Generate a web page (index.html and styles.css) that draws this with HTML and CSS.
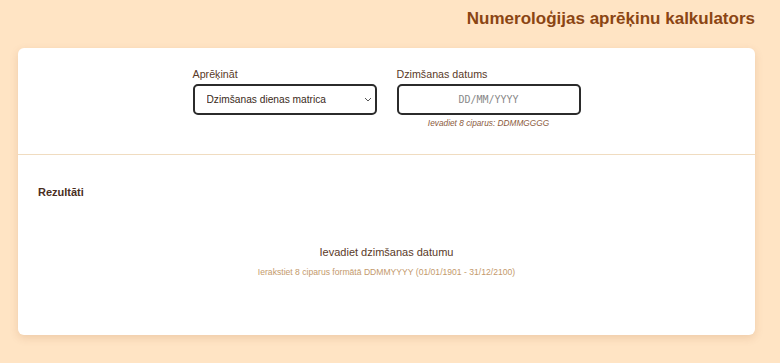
FILE: index.html
```html
<!DOCTYPE html>
<html lang="lv">
<head>
  <meta charset="UTF-8">
  <meta name="viewport" content="width=device-width, initial-scale=1.0">
  <title>Numeroloģijas aprēķinu kalkulators</title>
  <link rel="stylesheet" href="styles.css">
</head>
<body>
  <div class="page">
    <h1 class="title">Numeroloģijas aprēķinu kalkulators</h1>

    <div class="card">
      <!-- Input form -->
      <div class="form-section">
        <div class="field">
          <label for="calcType">Aprēķināt</label>
          <div class="select-wrap">
            <select id="calcType">
              <option>Dzimšanas dienas matrica</option>
            </select>
            <svg class="chevron" width="8" height="5" viewBox="0 0 8 5"><path d="M1 1l3 3 3-3" fill="none" stroke="#555" stroke-width="1"/></svg>
          </div>
        </div>
        <div class="field">
          <label for="birthDate">Dzimšanas datums</label>
          <input type="text" id="birthDate" placeholder="DD/MM/YYYY">
          <p class="hint">Ievadiet 8 ciparus: DDMMGGGG</p>
        </div>
      </div>

      <!-- Results -->
      <div class="results-section">
        <h3>Rezultāti</h3>
        <div class="empty-state">
          <p class="empty-main">Ievadiet dzimšanas datumu</p>
          <p class="empty-sub">Ierakstiet 8 ciparus formātā DDMMYYYY (01/01/1901 - 31/12/2100)</p>
        </div>
      </div>
    </div>
  </div>
</body>
</html>
```

FILE: styles.css
```css
/* Base styles */
* {
  box-sizing: border-box;
  font-family: "Liberation Sans", Arial, sans-serif;
}

body {
  margin: 0;
  background-color: #ffe4c4;
  color: #5a3a28;
}

.page {
  padding: 0 25px 27px 18px;
}

/* Header */
.title {
  margin: 0;
  padding: 9px 0 19px;
  text-align: right;
  font-size: 17px;
  line-height: 20px;
  color: #8b4513;
}

/* Card */
.card {
  background-color: #fff;
  border-radius: 6px;
  box-shadow: 0 3px 8px rgba(139, 69, 19, 0.15);
}

/* Form */
.form-section {
  display: flex;
  justify-content: center;
  gap: 20px;
  padding: 19px 20px 26px;
  border-bottom: 1px solid #f0dcc0;
}

.field {
  width: 184px;
  display: flex;
  flex-direction: column;
}

.field label {
  font-size: 10.7px;
  line-height: 14px;
  margin-bottom: 3px;
  color: #5a3a28;
}

.select-wrap {
  position: relative;
}

select,
input[type="text"] {
  width: 100%;
  height: 31px;
  border: 2px solid #2b2b2b;
  border-radius: 5px;
  background: #fff;
  font-size: 10.2px;
  color: #3a2a20;
  outline: none;
}

select {
  -webkit-appearance: none;
  appearance: none;
  padding: 0 20px 0 12px;
}

.chevron {
  position: absolute;
  right: 5px;
  top: 13px;
  pointer-events: none;
}

input[type="text"] {
  text-align: center;
  font-family: "DejaVu Sans Mono", monospace;
  font-size: 10px;
}

input::placeholder {
  color: #8a8a8a;
}

.hint {
  margin: 3px 0 0;
  text-align: center;
  font-size: 8.3px;
  font-style: italic;
  color: #8b5a3c;
}

/* Results */
.results-section {
  padding: 30px 20px 57px;
}

.results-section h3 {
  margin: 0;
  font-size: 11px;
  line-height: 14px;
  color: #4a2e1e;
}

.empty-state {
  text-align: center;
  padding-top: 47px;
}

.empty-main {
  margin: 0 0 8px;
  font-size: 11px;
  line-height: 13px;
  color: #5a3a28;
}

.empty-sub {
  margin: 0;
  font-size: 8.6px;
  line-height: 11px;
  color: #c49a6c;
}
```
